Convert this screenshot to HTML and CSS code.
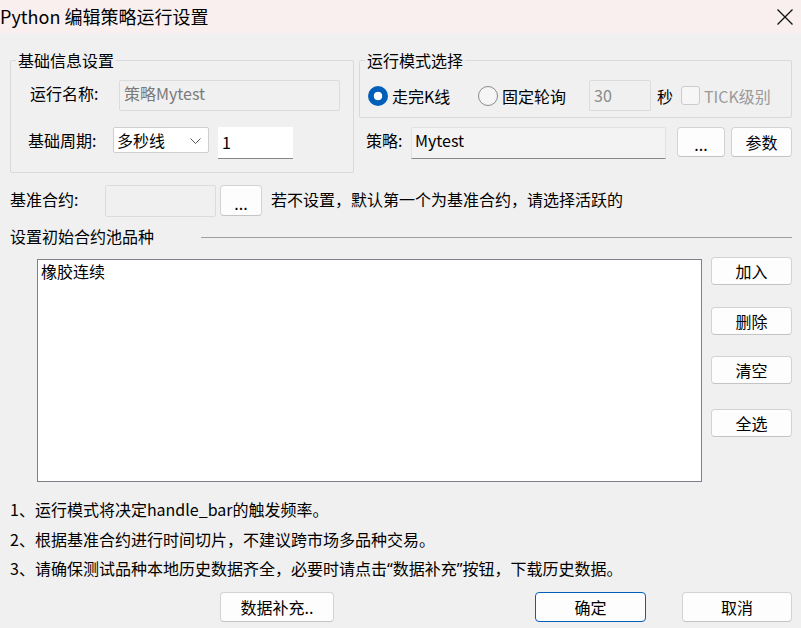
FILE: index.html
```html
<!DOCTYPE html>
<html lang="zh-CN">
<head>
<meta charset="utf-8">
<title>Python 编辑策略运行设置</title>
<link rel="stylesheet" href="styles.css">
</head>
<body>
<div class="window">
  <div class="titlebar">
    <span class="title">Python 编辑策略运行设置</span>
    <svg class="close" width="16" height="16" viewBox="0 0 16 16"><path d="M0.5 0.5 L15.5 15.5 M15.5 0.5 L0.5 15.5" stroke="#111" stroke-width="1.3" fill="none"/></svg>
  </div>
  <div class="content">
    <div class="top">
      <fieldset class="grp grp-basic">
        <legend>基础信息设置</legend>
        <div class="row row-name">
          <span class="lbl lbl-name">运行名称:</span>
          <div class="inp inp-dis inp-name">策略Mytest</div>
        </div>
        <div class="row row-period">
          <span class="lbl lbl-period">基础周期:</span>
          <div class="select">多秒线<svg class="chev" width="11" height="6" viewBox="0 0 11 6"><path d="M0.5 0.5 L5.5 5.5 L10.5 0.5" stroke="#555" stroke-width="1" fill="none"/></svg></div>
          <div class="inp inp-white inp-num">1</div>
        </div>
      </fieldset>
      <div class="rightcol">
        <fieldset class="grp grp-mode">
          <legend>运行模式选择</legend>
          <div class="row row-mode">
            <span class="opt opt1"><span class="radio radio-on"></span>走完K线</span>
            <span class="opt opt2"><span class="radio"></span>固定轮询</span>
            <div class="inp inp-dis inp-sec">30</div>
            <span class="sec">秒</span>
            <span class="check"></span>
            <span class="tick">TICK级别</span>
          </div>
        </fieldset>
        <div class="row row-strat">
          <span class="lbl lbl-strat">策略:</span>
          <div class="inp inp-strat">Mytest</div>
          <button class="btn btn-dots">...</button>
          <button class="btn btn-param">参数</button>
        </div>
      </div>
    </div>
    <div class="row row-base">
      <span class="lbl lbl-base">基准合约:</span>
      <div class="inp inp-dis inp-base"></div>
      <button class="btn btn-dots2">...</button>
      <span class="hint">若不设置，默认第一个为基准合约，请选择活跃的</span>
    </div>
    <div class="sect">
      <span class="sect-title">设置初始合约池品种</span>
      <span class="sect-line"></span>
    </div>
    <div class="pool">
      <div class="list"><div class="item">橡胶连续</div></div>
      <div class="side">
        <button class="btn sbtn sb1">加入</button>
        <button class="btn sbtn sb2">删除</button>
        <button class="btn sbtn sb3">清空</button>
        <button class="btn sbtn sb4">全选</button>
      </div>
    </div>
    <div class="notes">
      <div>1、运行模式将决定handle_bar的触发频率。</div>
      <div>2、根据基准合约进行时间切片，不建议跨市场多品种交易。</div>
      <div>3、请确保测试品种本地历史数据齐全，必要时请点击<span class="q">“</span>数据补充<span class="q">”</span>按钮，下载历史数据。</div>
    </div>
    <div class="bottom">
      <button class="btn bb bb-data">数据补充..</button>
      <button class="btn bb bb-ok">确定</button>
      <button class="btn bb bb-cancel">取消</button>
    </div>
  </div>
</div>
</body>
</html>
```
FILE: styles.css
```css
* { box-sizing: border-box; }
html, body { margin: 0; padding: 0; }
body {
  width: 801px;
  height: 628px;
  overflow: hidden;
  background: #f0f0f0;
  font-family: "Noto Sans CJK SC", "Noto Sans", sans-serif;
  font-size: 16px;
  color: #000;
}
.window { width: 801px; height: 628px; }
.titlebar {
  height: 33px;
  background: #f9efef;
  display: flex;
  align-items: center;
  justify-content: space-between;
}
.title {
  font-size: 18px;
  line-height: 33px;
  margin-left: 0;
  color: #000;
}
.close { margin-right: 8px; margin-top: 0; }
.content { padding: 0 9px 0 10px; }
.top { display: flex; align-items: flex-start; margin-top: 18px; }
.grp {
  margin: 0;
  padding: 0;
  border: 1px solid #d9d9d9;
  border-radius: 2px;
  min-width: 0;
}
.grp legend {
  padding: 0 2px;
  margin-left: 5px;
  line-height: 18px;
  font-size: 16px;
}
.grp-basic { width: 344px; padding-bottom: 13px; }
.rightcol { width: 433px; margin-left: 5px; }
.grp-mode { width: 433px; padding-bottom: 6px; }
.row { display: flex; align-items: flex-start; }
.lbl { line-height: 26px; white-space: nowrap; }
.row-name { margin-top: 11px; padding-left: 19px; }
.lbl-name { width: 89px; }
.inp {
  height: 31px;
  padding: 1px 4px 0 4px;
  line-height: 22px;
  white-space: nowrap;
  overflow: hidden;
}
.inp-dis {
  border: 1px solid #dcdcdc;
  background: #f0f0f0;
  color: #7a7a7a;
  border-radius: 2px;
}
.inp-name { width: 221px; }
.row-period { margin-top: 16px; padding-left: 17px; }
.lbl-period { width: 85px; }
.select {
  width: 96px;
  height: 26px;
  background: #fff;
  border: 1px solid #cfcfcf;
  border-radius: 2px;
  line-height: 24px;
  padding-left: 3px;
  display: flex;
  align-items: center;
  justify-content: space-between;
  padding-right: 7px;
}
.chev { margin-top: 1px; }
.inp-white {
  background: #fff;
  border-bottom: 1px solid #868686;
}
.inp-num { width: 75px; height: 32px; margin-left: 9px; padding-top: 4px; padding-left: 4px; }
.row-mode { margin-top: 11px; padding-left: 8px; align-items: center; height: 31px; }
.row-mode .inp { align-self: flex-start; }
.opt { display: flex; align-items: center; line-height: 22px; }
.opt1 { width: 110px; }
.opt2 { width: 111px; }
.radio {
  width: 20px;
  height: 20px;
  border-radius: 50%;
  border: 1px solid #8a8a8a;
  background: #f6f6f6;
  margin-right: 4px;
  flex: none;
}
.radio-on {
  border: none;
  background: radial-gradient(circle, #fff 0, #fff 4px, #005fb8 4.6px);
}
.inp-sec { width: 62px; padding-top: 3px; color: #8a8a8a; }
.sec { margin-left: 6px; line-height: 22px; }
.check {
  width: 19px;
  height: 19px;
  border: 1px solid #cccccc;
  border-radius: 3px;
  background: #f6f6f6;
  margin-left: 8px;
  flex: none;
}
.tick { margin-left: 4px; color: #9a9a9a; line-height: 22px; }
.row-strat { margin-top: 9px; padding-left: 7px; }
.lbl-strat { width: 45px; line-height: 26px; }
.inp-strat {
  width: 255px;
  height: 32px;
  background: #f3f3f3;
  border: 1px solid #e2e2e2;
  border-bottom: 1px solid #868686;
  padding-top: 1px;
  padding-left: 3px;
  color: #000;
  border-radius: 2px 2px 0 0;
}
.btn {
  font-family: "Noto Sans CJK SC", "Noto Sans", sans-serif;
  font-size: 16px;
  color: #000;
  background: #fdfdfd;
  border: 1px solid #d3d3d3;
  border-bottom-color: #c4c4c4;
  border-radius: 4px;
  padding: 0;
  margin: 0;
  line-height: 20px;
  text-align: center;
}
.btn-dots { width: 48px; height: 30px; margin-left: 11px; padding-top: 4px; }
.btn-param { width: 61px; height: 30px; margin-left: 6px; }
.row-base { margin-top: 13px; }
.lbl-base { width: 95px; line-height: 26px; }
.inp-base { width: 111px; height: 32px; margin-top: -1px; }
.btn-dots2 { width: 42px; height: 31px; margin-left: 4px; margin-top: -1px; padding-top: 4px; }
.hint { margin-left: 9px; line-height: 26px; }
.sect { display: flex; align-items: center; margin-top: 9px; height: 20px; }
.sect-title { width: 191px; line-height: 20px; }
.sect-line { flex: 1; height: 1px; background: #a0a0a0; margin-top: 3px; }
.pool { display: flex; align-items: flex-start; margin-top: 13px; }
.list {
  width: 665px;
  height: 223px;
  margin-left: 27px;
  background: #fff;
  border: 1px solid #7f7f87;
  padding: 1px 3px;
}
.item { line-height: 20px; }
.side { display: flex; flex-direction: column; width: 81px; margin-left: 9px; margin-top: -2px; }
.sbtn { width: 81px; height: 28px; }
.sb2 { margin-top: 22px; }
.sb3 { margin-top: 21px; }
.sb4 { margin-top: 25px; }
.notes { margin-top: 13px; line-height: 29.5px; }
.q { font-family: "Noto Sans", sans-serif; }
.bottom { display: flex; margin-top: 7px; }
.bb { height: 30px; }
.bb-data { width: 114px; margin-left: 210px; }
.bb-ok { width: 111px; margin-left: 201px; border: 1px solid #005fb8; }
.bb-cancel { width: 110px; margin-left: 36px; }
```
